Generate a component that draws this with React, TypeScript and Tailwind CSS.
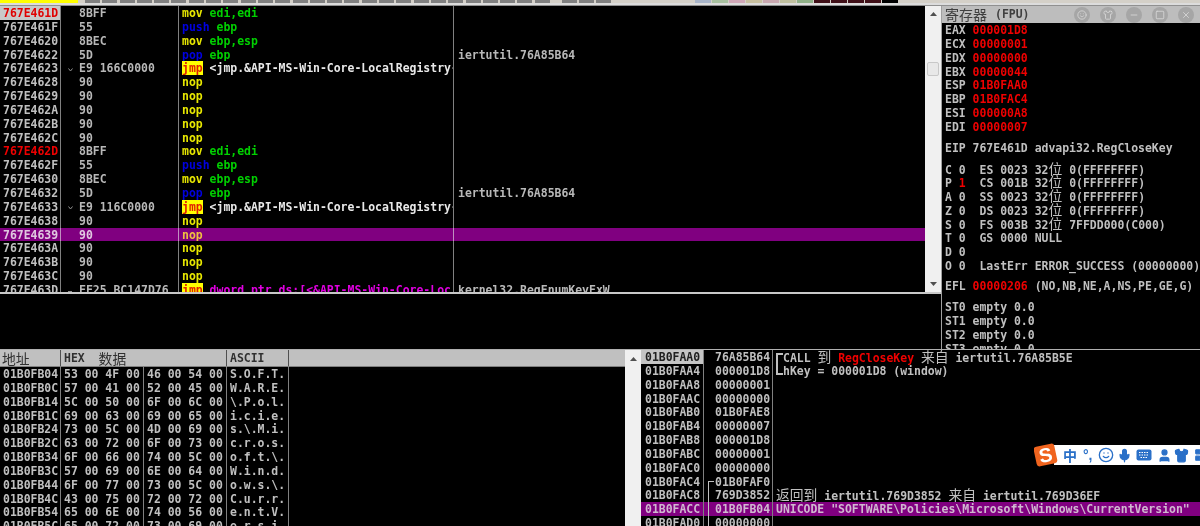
import type { ReactNode } from "react";
import { LayoutGrid, Mic, Minus, Shirt, Smile, Square, User, X } from "lucide-react";

const mono = "font-['DejaVu_Sans_Mono','Noto_Sans_CJK_SC',monospace] text-[11.46px] font-bold leading-[15px] whitespace-pre";

// CJK glyphs take exactly two columns of the fixed grid
function Cn({ children }: { children: ReactNode }) {
  return <span className="font-['Noto_Sans_CJK_SC',sans-serif] text-[13.8px] font-normal leading-none">{children}</span>;
}

function Mov({ m, ops }: { m: "mov" | "push" | "pop"; ops: string }) {
  return (
    <>
      <span className={m === "mov" ? "text-[#e8e800]" : "text-[#0000e0]"}>{m}</span>
      <span className="text-[#00d000]"> {ops}</span>
    </>
  );
}

function Nop() {
  return <span className="text-[#e8e800]">nop</span>;
}

function Jmp({ children, pink }: { children: ReactNode; pink?: boolean }) {
  return (
    <>
      <span className="inline-block h-[14px] bg-[#ffff00] align-top text-[#e02000]">jmp</span>
      <span className={pink ? "text-[#e000e0]" : "text-[#e8e8e8]"}> {children}</span>
    </>
  );
}

const mark = "jmp";
const disasm: { a: string; b: string; d: ReactNode; c?: string; j?: string; red?: boolean; sel?: boolean; cur?: boolean }[] = [
  { a: "767E461D", b: "8BFF", d: <Mov m="mov" ops="edi,edi" />, cur: true },
  { a: "767E461F", b: "55", d: <Mov m="push" ops="ebp" /> },
  { a: "767E4620", b: "8BEC", d: <Mov m="mov" ops="ebp,esp" /> },
  { a: "767E4622", b: "5D", d: <Mov m="pop" ops="ebp" />, c: "iertutil.76A85B64" },
  { a: "767E4623", b: "E9 166C0000", d: <Jmp>{"<jmp.&API-MS-Win-Core-LocalRegistry-"}</Jmp>, j: mark },
  { a: "767E4628", b: "90", d: <Nop /> },
  { a: "767E4629", b: "90", d: <Nop /> },
  { a: "767E462A", b: "90", d: <Nop /> },
  { a: "767E462B", b: "90", d: <Nop /> },
  { a: "767E462C", b: "90", d: <Nop /> },
  { a: "767E462D", b: "8BFF", d: <Mov m="mov" ops="edi,edi" />, red: true },
  { a: "767E462F", b: "55", d: <Mov m="push" ops="ebp" /> },
  { a: "767E4630", b: "8BEC", d: <Mov m="mov" ops="ebp,esp" /> },
  { a: "767E4632", b: "5D", d: <Mov m="pop" ops="ebp" />, c: "iertutil.76A85B64" },
  { a: "767E4633", b: "E9 116C0000", d: <Jmp>{"<jmp.&API-MS-Win-Core-LocalRegistry-"}</Jmp>, j: mark },
  { a: "767E4638", b: "90", d: <Nop /> },
  { a: "767E4639", b: "90", d: <span className="text-[#f0c040]">nop</span>, sel: true },
  { a: "767E463A", b: "90", d: <Nop /> },
  { a: "767E463B", b: "90", d: <Nop /> },
  { a: "767E463C", b: "90", d: <Nop /> },
  { a: "767E463D", b: "FF25 BC147D76", d: <Jmp pink>{"dword ptr ds:[<&API-MS-Win-Core-Loc"}</Jmp>, c: "kernel32.RegEnumKeyExW", j: "dash" },
];

const hexRows = [
  ["01B0FB04", "53 00 4F 00", "46 00 54 00", "S.O.F.T."],
  ["01B0FB0C", "57 00 41 00", "52 00 45 00", "W.A.R.E."],
  ["01B0FB14", "5C 00 50 00", "6F 00 6C 00", "\\.P.o.l."],
  ["01B0FB1C", "69 00 63 00", "69 00 65 00", "i.c.i.e."],
  ["01B0FB24", "73 00 5C 00", "4D 00 69 00", "s.\\.M.i."],
  ["01B0FB2C", "63 00 72 00", "6F 00 73 00", "c.r.o.s."],
  ["01B0FB34", "6F 00 66 00", "74 00 5C 00", "o.f.t.\\."],
  ["01B0FB3C", "57 00 69 00", "6E 00 64 00", "W.i.n.d."],
  ["01B0FB44", "6F 00 77 00", "73 00 5C 00", "o.w.s.\\."],
  ["01B0FB4C", "43 00 75 00", "72 00 72 00", "C.u.r.r."],
  ["01B0FB54", "65 00 6E 00", "74 00 56 00", "e.n.t.V."],
  ["01B0FB5C", "65 00 72 00", "73 00 69 00", "e.r.s.i."],
];

const stack: { a: string; v: string; c?: ReactNode; br?: string; vb?: string }[] = [
  {
    a: "01B0FAA0",
    v: "76A85B64",
    br: "top",
    c: (
      <>
        {"CALL "}
        <Cn>到</Cn> <span className="text-[#f00000]">RegCloseKey</span> <Cn>来自</Cn> iertutil.76A85B5E
      </>
    ),
  },
  { a: "01B0FAA4", v: "000001D8", br: "bottom", c: "hKey = 000001D8 (window)" },
  { a: "01B0FAA8", v: "00000001" },
  { a: "01B0FAAC", v: "00000000" },
  { a: "01B0FAB0", v: "01B0FAE8" },
  { a: "01B0FAB4", v: "00000007" },
  { a: "01B0FAB8", v: "000001D8" },
  { a: "01B0FABC", v: "00000001" },
  { a: "01B0FAC0", v: "00000000" },
  { a: "01B0FAC4", v: "01B0FAF0", vb: "start" },
  {
    a: "01B0FAC8",
    v: "769D3852",
    vb: "line",
    c: (
      <>
        <Cn>返回到</Cn> iertutil.769D3852 <Cn>来自</Cn> iertutil.769D36EF
      </>
    ),
  },
  { a: "01B0FACC", v: "01B0FB04", vb: "line", c: 'UNICODE "SOFTWARE\\Policies\\Microsoft\\Windows\\CurrentVersion"' },
  { a: "01B0FAD0", v: "00000000", vb: "line" },
];

const regs = [
  ["EAX", "000001D8"],
  ["ECX", "00000001"],
  ["EDX", "00000000"],
  ["EBX", "00000044"],
  ["ESP", "01B0FAA0"],
  ["EBP", "01B0FAC4"],
  ["ESI", "000000A8"],
  ["EDI", "00000007"],
];

const flags = [
  ["C", "0", "ES 0023 32", " 0(FFFFFFFF)"],
  ["P", "1", "CS 001B 32", " 0(FFFFFFFF)"],
  ["A", "0", "SS 0023 32", " 0(FFFFFFFF)"],
  ["Z", "0", "DS 0023 32", " 0(FFFFFFFF)"],
  ["S", "0", "FS 003B 32", " 7FFDD000(C000)"],
];

const toolButtons = Array.from({ length: 27 }, (_, i) => i);
const colorButtons = [
  "bg-[#a8b4c8]",
  "bg-[#a8c0a0]",
  "bg-[#d0a8b8]",
  "bg-[#c8c0a0]",
  "bg-[#c8a8b0]",
  "bg-[#c0c0a0]",
  "bg-[#90b088]",
  "bg-[#401018]",
  "bg-[#401018]",
  "bg-[#401018]",
  "bg-[#401018]",
  "bg-[#000000]",
];

function Toolbar() {
  return (
    <div className="shrink-0">
      <div className="flex h-[3px] bg-[#d4d0c8]">
        <div className="w-[78px] bg-[#ffff00]" />
        <div className="ml-[7px] flex gap-[2.3px]">
          {toolButtons.map((i) => (
            <div key={i} className="w-[15px] bg-[#808080]" />
          ))}
        </div>
        <div className="ml-[12px] flex gap-[2.3px]">
          <div className="w-[15px] bg-[#808080]" />
          <div className="w-[15px] bg-[#808080]" />
          <div className="w-[15px] bg-[#808080]" />
        </div>
        <div className="ml-[84px] flex gap-[1.5px]">
          {colorButtons.map((c, i) => (
            <div key={i} className={"w-[15.5px] " + c} />
          ))}
        </div>
      </div>
      <div className="h-[2px] bg-[#dcdcdc]" />
      <div className="h-px bg-[#909090]" />
    </div>
  );
}

function ScrollArrow({ down }: { down?: boolean }) {
  return (
    <svg width="7" height="4" viewBox="0 0 7 4" className={down ? "rotate-180" : ""}>
      <path d="M0 4 L3.5 0 L7 4 Z" fill="#505050" />
    </svg>
  );
}

function Disasm() {
  return (
    <div className="flex h-[286px] shrink-0">
      <div className={"w-[925px] overflow-hidden bg-black " + mono}>
        {disasm.map((r) => (
          <div key={r.a} className={r.sel ? "flex h-[13.85px] bg-[#800080]" : "flex h-[13.85px]"}>
            <div
              className={
                "w-[61px] shrink-0 border-r pl-[3px] " +
                (r.sel ? "border-[#c090c0] " : "border-[#808080] ") +
                (r.cur ? "bg-[#c8c8c8] text-[#e00000]" : r.red ? "text-[#f00000]" : r.sel ? "text-[#e0c8e0]" : "text-[#c0c0c0]")
              }
            >
              {r.a}
            </div>
            <div className={"flex w-[118px] shrink-0 border-r " + (r.sel ? "border-[#c090c0] text-[#e0c8e0]" : "border-[#808080] text-[#b8b8b8]")}>
              <div className="flex w-[18px] shrink-0 items-center justify-center pt-[3px]">
                {r.j === "jmp" && (
                  <svg width="5" height="4" viewBox="0 0 5 4">
                    <path d="M0.5 0.5 L2.5 3 L4.5 0.5" fill="none" stroke="#909090" />
                  </svg>
                )}
                {r.j === "dash" && <div className="h-px w-[4px] bg-[#909090]" />}
              </div>
              {r.b}
            </div>
            <div className={"w-[275px] shrink-0 overflow-hidden border-r pl-[3px] " + (r.sel ? "border-[#c090c0]" : "border-[#808080]")}>{r.d}</div>
            <div className="flex-1 pl-[4px] text-[#b8b8b8]">{r.c}</div>
          </div>
        ))}
      </div>
      <div className="relative flex w-[16px] flex-col items-center justify-between bg-[#f0f0f0] py-[6px]">
        <ScrollArrow />
        <div className="absolute top-[56px] left-[2px] h-[14px] w-[12px] rounded-[2px] border border-[#c8c8c8] bg-[#e8e8e8]" />
        <ScrollArrow down />
      </div>
    </div>
  );
}

function Registers() {
  const flagRow = "flex h-[13.85px] text-[#c0c0c0]";
  return (
    <div className={"h-[343px] w-[258px] shrink-0 overflow-hidden text-[#c0c0c0] " + mono}>
      <div className="flex h-[17px] items-center bg-[#bdbdbd] pl-[3px] text-[#404040]">
        <span className="font-['Noto_Sans_CJK_SC',sans-serif] text-[14px] font-normal">寄存器</span>
        <span className="ml-[8px]">(FPU)</span>
        <div className="ml-[45px] flex items-center gap-[10px]">
          {[Smile, Shirt, Minus, Square, X].map((Icon, i) => (
            <div key={i} className="flex h-[16px] w-[16px] items-center justify-center rounded-full bg-[#a6a6a6]">
              <Icon size={10} color="#d8d8d8" strokeWidth={2} />
            </div>
          ))}
        </div>
      </div>
      <div className="pl-[3px]">
        {regs.map(([n, v]) => (
          <div key={n} className="h-[13.85px]">
            {n} <span className="text-[#f00000]">{v}</span>
          </div>
        ))}
        <div className="mt-[7px] h-[13.85px]">EIP 767E461D advapi32.RegCloseKey</div>
        <div className="mt-[7px]">
          {flags.map(([f, b, s, rest]) => (
            <div key={f} className={flagRow}>
              <span>
                {f} <span className={b === "1" ? "text-[#f00000]" : ""}>{b}</span>
                {"  "}
                {s}
                <Cn>位</Cn>
                {rest}
              </span>
            </div>
          ))}
          <div className={flagRow}>T 0  GS 0000 NULL</div>
          <div className={flagRow}>D 0</div>
          <div className={flagRow}>O 0  LastErr ERROR_SUCCESS (00000000)</div>
        </div>
        <div className="mt-[7px] h-[13.85px]">
          EFL <span className="text-[#f00000]">00000206</span> (NO,NB,NE,A,NS,PE,GE,G)
        </div>
        <div className="mt-[7px]">
          <div className="h-[13.85px]">ST0 empty 0.0</div>
          <div className="h-[13.85px]">ST1 empty 0.0</div>
          <div className="h-[13.85px]">ST2 empty 0.0</div>
          <div className="h-[13.85px]">ST3 empty 0.0</div>
        </div>
      </div>
    </div>
  );
}

function HexDump() {
  return (
    <div className="flex w-[641px] shrink-0">
      <div className={"w-[625px] overflow-hidden bg-black " + mono}>
        <div className="flex h-[17px] items-center border-b border-[#808080] bg-[#c0c0c0] text-[#303030]">
          <div className="flex h-full w-[61px] items-center border-r border-[#505050] pl-[2px]">
            <span className="font-['Noto_Sans_CJK_SC',sans-serif] text-[13.8px] font-normal">地址</span>
          </div>
          <div className="flex h-full w-[166px] items-center border-r border-[#505050] pl-[3px]">
            HEX <span className="ml-[7px] font-['Noto_Sans_CJK_SC',sans-serif] text-[13.8px] font-normal">数据</span>
          </div>
          <div className="flex h-full w-[62px] items-center border-r border-[#505050] pl-[3px]">ASCII</div>
        </div>
        {hexRows.map(([a, h1, h2, s]) => (
          <div key={a} className="flex h-[13.85px] text-[#c0c0c0]">
            <div className="w-[61px] shrink-0 border-r border-[#808080] pl-[3px]">{a}</div>
            <div className="w-[83px] shrink-0 border-r border-[#808080] pl-[3px]">{h1}</div>
            <div className="w-[83px] shrink-0 border-r border-[#808080] pl-[3px]">{h2}</div>
            <div className="w-[62px] shrink-0 border-r border-[#808080] pl-[3px]">{s}</div>
          </div>
        ))}
      </div>
      <div className="flex w-[16px] flex-col items-center bg-[#f0f0f0] pt-[7px]">
        <ScrollArrow />
      </div>
    </div>
  );
}

function Stack() {
  return (
    <div className={"min-w-0 flex-1 overflow-hidden bg-black " + mono}>
      {stack.map((r, i) => {
        const sel = i === 11;
        return (
          <div key={r.a} className={sel ? "flex h-[13.85px] bg-[#800080] text-[#d0b8d0]" : "flex h-[13.85px] text-[#c0c0c0]"}>
            <div className={"w-[63px] shrink-0 border-r border-[#808080] pl-[4px] " + (i === 0 ? "bg-[#c4c4c4] text-[#202020]" : "")}>{r.a}</div>
            <div className="flex w-[69px] shrink-0 border-r border-[#808080] pl-[4px]">
              <div
                className={
                  "w-[6px] shrink-0 " +
                  (r.vb === "start" ? "mt-[6px] border-t border-l border-[#c0c0c0]" : r.vb === "line" ? "border-l border-[#c0c0c0]" : "")
                }
              />
              <span className="ml-px">{r.v}</span>
            </div>
            <div className="flex min-w-0 flex-1 pl-[3px]">
              {r.br === "top" && <div className="mt-[3px] w-[7px] shrink-0 border-t-2 border-l-2 border-[#c0c0c0]" />}
              {r.br === "bottom" && <div className="mb-[3px] w-[7px] shrink-0 border-b-2 border-l-2 border-[#c0c0c0]" />}
              <span>{r.c}</span>
            </div>
          </div>
        );
      })}
    </div>
  );
}

// sogou input method bar floating over the stack pane
function ImeBar() {
  return (
    <div className="absolute top-[443px] left-[1034px] flex h-[24px] w-[166px] items-center overflow-hidden">
      <div className="absolute top-[2px] left-[20px] flex h-[20px] w-[146px] items-center bg-white pl-[9px] text-[#2a70c8]">
        <span className="font-['Noto_Sans_CJK_SC',sans-serif] text-[14px] font-bold leading-none">中</span>
        <span className="ml-[6px] font-['Liberation_Sans',sans-serif] text-[14px] font-bold leading-none">°,</span>
        <Smile className="ml-[5px] shrink-0" size={16} strokeWidth={2} />
        <Mic className="ml-[3.5px] shrink-0" size={15} fill="#2a70c8" strokeWidth={2} />
        <svg className="ml-[3.5px] shrink-0" width="16" height="12" viewBox="0 0 16 12">
          <rect x="0.5" y="0.5" width="15" height="11" rx="2" fill="#2a70c8" />
          <path d="M3 3.5H13M3 6H13M4.5 8.5H11.5" stroke="#ffffff" strokeWidth="1" strokeDasharray="1.5 1" />
        </svg>
        <User className="ml-[5.5px] shrink-0" size={15} fill="#2a70c8" strokeWidth={2} />
        <Shirt className="ml-[2px] shrink-0" size={15} fill="#2a70c8" strokeWidth={2} />
        <LayoutGrid className="ml-[4.5px] shrink-0" size={14} fill="#2a70c8" strokeWidth={2} />
      </div>
      <div className="relative ml-[1px] flex h-[20px] w-[21px] -rotate-12 items-center justify-center rounded-[3px] bg-[#f0641e]">
        <span className="font-['Liberation_Sans',sans-serif] text-[20px] font-bold leading-none text-white">S</span>
      </div>
    </div>
  );
}

export default function App() {
  return (
    <div className="relative flex h-[526px] w-[1200px] flex-col overflow-hidden bg-black blur-[0.3px]">
      <Toolbar />
      <div className="flex h-[343px] shrink-0">
        <div className="flex w-[941px] shrink-0 flex-col">
          <Disasm />
          <div className="h-[2px] shrink-0 bg-[#c8c8c8]" />
        </div>
        <div className="w-px shrink-0 bg-[#a0a0a0]" />
        <Registers />
      </div>
      <div className="h-[1px] shrink-0 bg-[#b0b0b0]" />
      <div className="flex min-h-0 flex-1">
        <HexDump />
        <Stack />
      </div>
      <ImeBar />
    </div>
  );
}
